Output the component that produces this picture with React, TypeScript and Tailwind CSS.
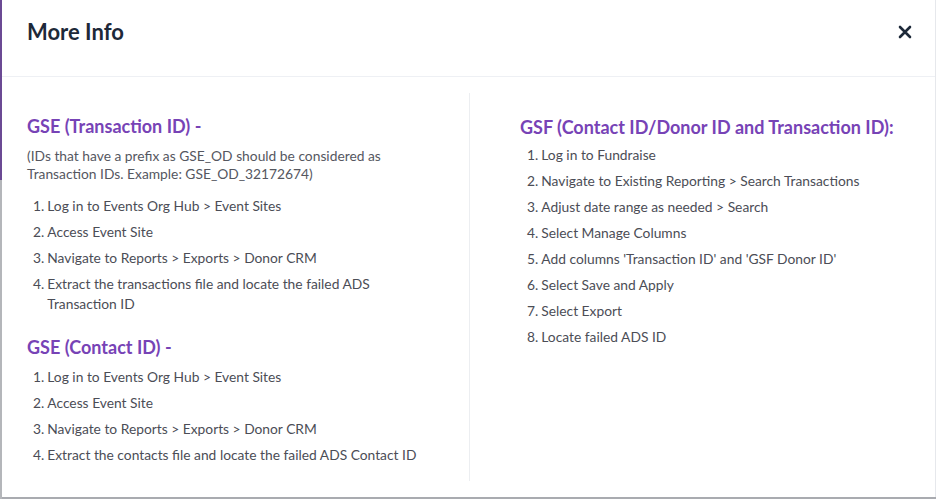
const gseTransaction = [
  "Log in to Events Org Hub > Event Sites",
  "Access Event Site",
  "Navigate to Reports > Exports > Donor CRM",
  "Extract the transactions file and locate the failed ADS Transaction ID",
];

const gseContact = [
  "Log in to Events Org Hub > Event Sites",
  "Access Event Site",
  "Navigate to Reports > Exports > Donor CRM",
  "Extract the contacts file and locate the failed ADS Contact ID",
];

const gsf = [
  "Log in to Fundraise",
  "Navigate to Existing Reporting > Search Transactions",
  "Adjust date range as needed > Search",
  "Select Manage Columns",
  "Add columns 'Transaction ID' and 'GSF Donor ID'",
  "Select Save and Apply",
  "Select Export",
  "Locate failed ADS ID",
];

export default function App() {
  return <div className="flex h-[499px] w-[936px] bg-[#a9abb0] font-['Lato',sans-serif]">
    <div className="flex w-[2px] flex-col"><div className="h-[180px] bg-[#6b4a94]" /><div className="flex-1 bg-[#b4b6ba]" /></div>
    <div className="mb-[2px] flex flex-1 flex-col border-r border-[#e6e8ec] bg-white">
      <div className="flex h-[77px] items-start justify-between border-b border-[#eef0f4] pl-[25px] pr-[23px] pt-[17px]">
        <h1 className="text-[22px] font-bold leading-[30px] text-[#1d2939]">More Info</h1>
        <button className="mt-[8px] text-[#1d2939]"><svg width="14" height="14" viewBox="0 0 14 14"><path d="M2 2 12 12M12 2 2 12" stroke="currentColor" strokeWidth="2.6" strokeLinecap="round" /></svg></button>
      </div>
      <div className="flex flex-1 pb-[16px] pt-[16px]">
        <div className="w-[467px] pl-[25px] pr-4 pt-[21px]">
          <Heading>GSE (Transaction ID) -</Heading>
          <p className="mt-[9px] text-[13.8px] leading-[18px] text-[#55575f]">(IDs that have a prefix as GSE_OD should be considered as<br />Transaction IDs. Example: GSE_OD_32172674)</p>
          <Steps items={gseTransaction} className="mt-[13px] w-[370px] pl-[6px]" />
          <Heading className="mt-[21px]">GSE (Contact ID) -</Heading>
          <Steps items={gseContact} className="mt-[8px] pl-[6px]" />
        </div>
        <div className="w-px bg-[#eceef1]" />
        <div className="flex-1 pl-[50px] pt-[22px]">
          <Heading>GSF (Contact ID/Donor ID and Transaction ID):</Heading>
          <Steps items={gsf} className="mt-[6px] pl-[7px]" />
        </div>
      </div>
    </div>
  </div>;
}

function Heading({ children, className = "" }: { children: React.ReactNode; className?: string }) {
  return <h2 className={`text-[18px] font-bold leading-[24px] text-[#7743b6] ${className}`}>{children}</h2>;
}

function Steps({ items, className = "" }: { items: string[]; className?: string }) {
  return <ol className={`flex flex-col gap-[6px] text-[13.8px] leading-[20px] text-[#4b4d56] ${className}`}>
    {items.map((item, i) => <li key={i} className="flex"><span className="shrink-0">{i + 1}.</span><span className="pl-[3px]">{item}</span></li>)}
  </ol>;
}
